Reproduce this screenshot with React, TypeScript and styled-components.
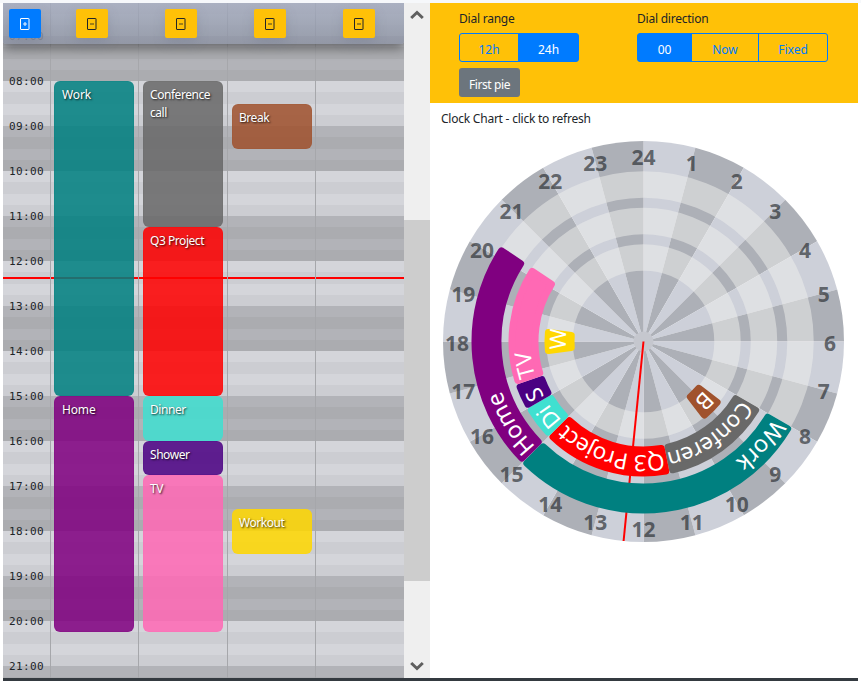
import React from "react";
import styled, { createGlobalStyle } from "styled-components";

const GlobalStyle = createGlobalStyle`
  * { box-sizing: border-box; }
  html, body { margin: 0; padding: 0; background: #fff; overflow: hidden; }
  body { font-family: "Noto Sans", "Open Sans", sans-serif; font-size: 12px; color: #212529; }
  button { font: inherit; margin: 0; cursor: pointer; }
`;

const Page = styled.div`
  width: 861px;
  height: 681px;
  padding: 0 3px;
  display: flex;
  flex-direction: column;
  background: #fff;
  box-shadow: inset 0 3px 0 #f6f8fb;
`;
const Main = styled.main`
  margin-top: 3px;
  height: 675px;
  display: flex;
`;
const Footer = styled.footer`
  height: 3px;
  background: #343a40;
`;

/* ---------- schedule ---------- */
const Schedule = styled.section`
  position: relative;
  width: 401px;
  height: 675px;
  overflow: hidden;
`;
const Toolbar = styled.header`
  position: absolute;
  inset: 0 0 auto 0;
  height: 41px;
  padding-top: 6px;
  display: grid;
  grid-template-columns: 44px repeat(4, 89px);
  border-radius: 0 0 3px 3px;
  background: linear-gradient(rgba(164, 171, 190, 0.84), rgba(140, 146, 162, 0.82));
  box-shadow: 0 4px 12px rgba(0, 0, 0, 0.45);
`;
const ToolCell = styled.div<{ $first?: boolean }>`
  display: flex;
  padding-left: ${(p) => (p.$first ? 6 : 29)}px;
`;
const ToolButton = styled.button<{ $primary?: boolean }>`
  width: 32px;
  height: 29px;
  padding: 0;
  border: 0;
  border-radius: 2px;
  display: flex;
  align-items: center;
  justify-content: center;
  color: ${(p) => (p.$primary ? "#fff" : "#212529")};
  background: ${(p) => (p.$primary ? "#007bff" : "#ffc107")};
  box-shadow: 0 5px 12px rgba(110, 116, 135, 0.3);
`;
const Sheet = styled.div`
  margin-top: -12px;
  height: 720px;
  display: grid;
  grid-template-columns: 47px 88px 89px 88px 89px;
  grid-template-rows: repeat(64, 11.25px);
`;
const Band = styled.div<{ $row: number; $color: string }>`
  grid-column: 1 / -1;
  grid-row: ${(p) => p.$row};
  background: ${(p) => p.$color};
`;
const HourLabel = styled.time<{ $row: number }>`
  grid-column: 1;
  grid-row: ${(p) => p.$row};
  margin: -7px 0 0 6px;
  height: 16px;
  line-height: 16px;
  font-family: "DejaVu Sans Mono", "Liberation Mono", monospace;
  font-size: 11px;
  letter-spacing: 0.4px;
`;
const NowLine = styled.div`
  grid-column: 1 / -1;
  grid-row: 26;
  height: 2px;
  margin-top: 5px;
  background: #f00;
`;
const Column = styled.div<{ $index: number }>`
  grid-column: ${(p) => p.$index + 2};
  grid-row: 1 / -1;
  border-left: 1px solid #a6a7ab;
`;
const Entry = styled.article<{ $col: number; $from: number; $to: number; $rgb: string }>`
  grid-column: ${(p) => p.$col + 2};
  grid-row: ${(p) => p.$from} / ${(p) => p.$to};
  width: 80px;
  margin-left: ${(p) => (p.$col ? 5 : 4)}px;
  padding: 4px 0 0 ${(p) => (p.$col ? 6 : 7)}px;
  border: 1px solid rgba(${(p) => p.$rgb}, 0.25);
  border-radius: 6px;
  background: rgba(${(p) => p.$rgb}, 0.86);
  color: #fff;
  line-height: 18px;
  letter-spacing: ${(p) => (p.$col ? -0.45 : -0.15)}px;
  text-shadow: 1px 1px 2px rgba(0, 0, 0, 0.8);
`;

const hours = Array.from({ length: 16 }, (_, i) => i + 6);
const bands = hours.flatMap((h) =>
  [0, 1, 2, 3].map((q) => ({
    row: (h - 6) * 4 + q + 1,
    color: h % 2 === 0 ? (q % 2 ? "#cccdd2" : "#d4d5da") : q % 2 ? "#abacb0" : "#b2b3b8",
  }))
);

type Item = { name: string; arc: string; col: number; from: number; to: number; rgb: string };
const items: Item[] = [
  { name: "Work", arc: "Work", col: 0, from: 8, to: 15, rgb: "0,128,128" },
  { name: "Home", arc: "Home", col: 0, from: 15, to: 20.25, rgb: "128,0,128" },
  { name: "Conference call", arc: "Conferen", col: 1, from: 8, to: 11.25, rgb: "105,105,105" },
  { name: "Q3 Project", arc: "Q3 Project", col: 1, from: 11.25, to: 15, rgb: "255,0,0" },
  { name: "Dinner", arc: "Di", col: 1, from: 15, to: 16, rgb: "64,224,208" },
  { name: "Shower", arc: "S", col: 1, from: 16, to: 16.75, rgb: "75,0,130" },
  { name: "TV", arc: "TV", col: 1, from: 16.75, to: 20.25, rgb: "255,105,180" },
  { name: "Break", arc: "B", col: 2, from: 8.5, to: 9.5, rgb: "160,82,45" },
  { name: "Workout", arc: "W", col: 2, from: 17.5, to: 18.5, rgb: "255,215,0" },
];
const rowOf = (t: number) => (t - 6) * 4 + 1;

const SheetIcon = ({ plus }: { plus?: boolean }) => (
  <svg width="12" height="14" viewBox="0 0 12 14" fill="none" stroke="currentColor">
    <rect x="1.5" y="1.5" width="8.5" height="11" rx="0.4" strokeWidth="1" />
    <path d="M4 7h4" strokeOpacity="0.6" strokeWidth="1.4" />
    {plus && <path d="M6 5v4" strokeOpacity="0.7" strokeWidth="1.4" />}
  </svg>
);

/* ---------- scrollbar ---------- */
const Scrollbar = styled.div`
  width: 26px;
  height: 675px;
  background: #efefef;
  display: flex;
  flex-direction: column;
  align-items: center;
  padding: 6px 0;
`;
const Thumb = styled.div`
  width: 26px;
  height: 361px;
  margin: 199px 0 auto;
  background: #cdcdcd;
`;

/* ---------- right side ---------- */
const Side = styled.section`
  width: 428px;
  letter-spacing: -0.23px;
`;
const Controls = styled.div`
  height: 100px;
  padding: 7px 0 0 29px;
  background: #ffc107;
  display: grid;
  grid-template-columns: 178px 1fr;
  grid-template-rows: 58px 29px;
`;
const Caption = styled.div`
  height: 18px;
  line-height: 18px;
  margin-bottom: 5px;
`;
const Group = styled.div`
  display: flex;
`;
const Segment = styled.button<{ $w: number; $active?: boolean }>`
  width: ${(p) => p.$w}px;
  height: 29px;
  padding: 3px 0 0;
  border: 1px solid #007bff;
  background: ${(p) => (p.$active ? "#007bff" : "transparent")};
  color: ${(p) => (p.$active ? "#fff" : "#007bff")};
  & + & { margin-left: -1px; }
  &:first-child { border-radius: 3px 0 0 3px; }
  &:last-child { border-radius: 0 3px 3px 0; }
`;
const PieButton = styled.button`
  width: 61px;
  height: 29px;
  padding: 3px 0 0;
  border: 0;
  border-radius: 3px;
  background: #6c757d;
  color: #fff;
  letter-spacing: -0.4px;
`;
const ChartTitle = styled.div`
  height: 18px;
  line-height: 18px;
  margin: 7px 0 0 11px;
`;
const Dial = styled.svg`
  display: block;
  margin: 10px 0 0 10px;
  letter-spacing: 0;
`;

const C = 203.5;
const pt = (r: number, deg: number) => {
  const a = (deg * Math.PI) / 180;
  return `${(C + r * Math.sin(a)).toFixed(2)} ${(C - r * Math.cos(a)).toFixed(2)}`;
};
const wedge = (r: number, a: number, b: number) => `M${C} ${C}L${pt(r, a)}A${r} ${r} 0 0 1 ${pt(r, b)}Z`;
const roundedArc = (ri: number, ro: number, a: number, b: number, c: number) => {
  const i = ri + c;
  const o = ro - c;
  const di = ((c / i) * 180) / Math.PI;
  const d0 = ((c / o) * 180) / Math.PI;
  const big = b - a > 180 ? 1 : 0;
  return `M${pt(o, a + d0)}A${o} ${o} 0 ${big} 1 ${pt(o, b - d0)}L${pt(i, b - di)}A${i} ${i} 0 ${big} 0 ${pt(i, a + di)}Z`;
};
const rings = [142, 105, 69];

const ClockChart = () => (
  <Dial width="407" height="407" viewBox="0 0 407 407">
    {Array.from({ length: 24 }, (_, i) => (
      <path key={i} d={wedge(200.5, i * 15, i * 15 + 15)} fill={i % 2 ? "#adb0b7" : "#cdd0d9"} />
    ))}
    <circle cx={C} cy={C} r="10" fill="#c5c7ce" />
    {[157, 120.5, 84].map((r) => (
      <circle key={r} cx={C} cy={C} r={r} fill="none" stroke="#f0f0ee" strokeOpacity="0.5" strokeWidth="26.5" />
    ))}
    {Array.from({ length: 24 }, (_, i) => {
      const a = ((i + 1) * Math.PI) / 12;
      return (
        <text
          key={i}
          x={C + 186.5 * Math.sin(a)}
          y={C - 186 * Math.cos(a) + 9}
          textAnchor="middle"
          fontSize="21"
          fontWeight="700"
          fill="#212529"
          fillOpacity="0.65"
        >
          {i + 1}
        </text>
      );
    })}
    <path d={`M${C} ${C}L${pt(200.5, 185.7)}`} stroke="#f00" strokeWidth="2" />
    {items.map((it) => {
      const a = it.from * 15;
      const b = it.to * 15;
      const ri = rings[it.col];
      const r = ri + 8.5;
      const id = `arc-${it.from}-${it.col}`;
      return (
        <g key={it.name}>
          <path
            d={roundedArc(ri, ri + 30, a, b, 3.5)}
            fill={`rgb(${it.rgb})`}
            stroke={`rgb(${it.rgb})`}
            strokeWidth="7"
            strokeLinejoin="round"
          />
          <path id={id} d={`M${pt(r, a)}A${r} ${r} 0 0 1 ${pt(r, a + 100)}`} fill="none" />
          <text fontSize={it.col ? 22.5 : 23.5} letterSpacing={it.col ? -0.5 : -0.2} fill="#fff">
            <textPath href={`#${id}`} startOffset="2">
              {it.arc}
            </textPath>
          </text>
        </g>
      );
    })}
  </Dial>
);

const Chevron = ({ down }: { down?: boolean }) => (
  <svg width="14" height="12" viewBox="0 0 14 12">
    <path d={down ? "M1.2 3l5.8 5.5L12.8 3" : "M1.2 9l5.8-5.5L12.8 9"} fill="none" stroke="#5f5f5f" strokeWidth="3" />
  </svg>
);

export default function App() {
  return (
    <Page>
      <GlobalStyle />
      <Main>
        <Schedule>
          <Sheet>
            {bands.map((b) => (
              <Band key={b.row} $row={b.row} $color={b.color} />
            ))}
            <NowLine />
            {[0, 1, 2, 3].map((c) => (
              <Column key={c} $index={c} />
            ))}
            {hours.slice(1).map((h) => (
              <HourLabel key={h} $row={rowOf(h)}>{`${String(h).padStart(2, "0")}:00`}</HourLabel>
            ))}
            {items.map((it) => (
              <Entry key={it.name} $col={it.col} $from={rowOf(it.from)} $to={rowOf(it.to)} $rgb={it.rgb}>
                {it.name}
              </Entry>
            ))}
          </Sheet>
          <Toolbar>
            <ToolCell $first>
              <ToolButton $primary><SheetIcon plus /></ToolButton>
            </ToolCell>
            {[0, 1, 2, 3].map((c) => (
              <ToolCell key={c}>
                <ToolButton><SheetIcon /></ToolButton>
              </ToolCell>
            ))}
          </Toolbar>
        </Schedule>
        <Scrollbar>
          <Chevron />
          <Thumb />
          <Chevron down />
        </Scrollbar>
        <Side>
          <Controls>
            <div>
              <Caption>Dial range</Caption>
              <Group>
                <Segment $w={60}>12h</Segment>
                <Segment $w={61} $active>24h</Segment>
              </Group>
            </div>
            <div>
              <Caption>Dial direction</Caption>
              <Group>
                <Segment $w={55} $active>00</Segment>
                <Segment $w={68}>Now</Segment>
                <Segment $w={70}>Fixed</Segment>
              </Group>
            </div>
            <PieButton>First pie</PieButton>
          </Controls>
          <ChartTitle>Clock Chart - click to refresh</ChartTitle>
          <ClockChart />
        </Side>
      </Main>
      <Footer />
    </Page>
  );
}
